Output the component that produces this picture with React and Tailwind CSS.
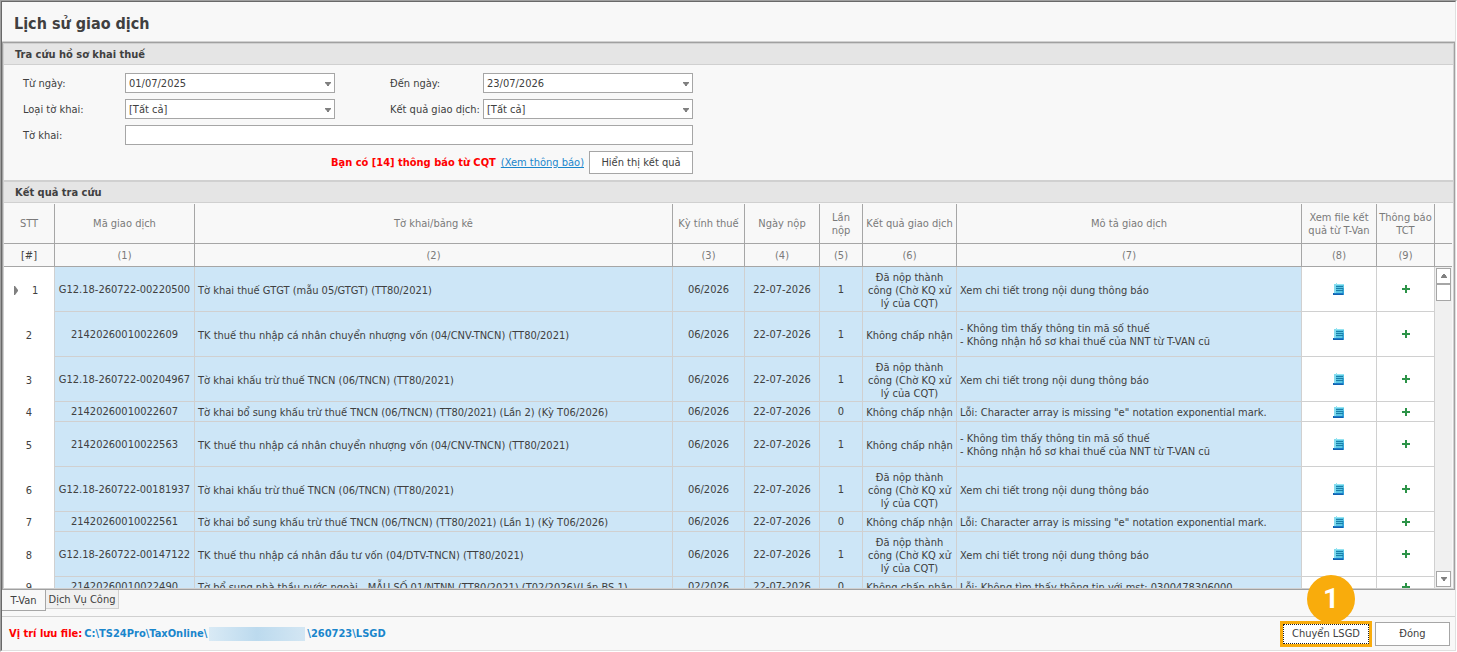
const columns = [
  { title: "Mã giao dịch", width: "w-[140px]" },
  { title: "Tờ khai/bảng kê", width: "w-[478px]" },
  { title: "Kỳ tính thuế", width: "w-[72px]" },
  { title: "Ngày nộp", width: "w-[75px]" },
  { title: "Lần nộp", width: "w-[43px]" },
  { title: "Kết quả giao dịch", width: "w-[94px]" },
  { title: "Mô tả giao dịch", width: "" },
  { title: "Xem file kết quả từ T-Van", width: "w-[75px]" },
  { title: "Thông báo TCT", width: "w-[58px]" },
];

const ACCEPTED = "Đã nộp thành công (Chờ KQ xử lý của CQT)";
const REJECTED = "Không chấp nhận";
const DETAIL = ["Xem chi tiết trong nội dung thông báo"];
const NOT_FOUND = [
  "- Không tìm thấy thông tin mã số thuế",
  "- Không nhận hồ sơ khai thuế của NNT từ T-VAN cũ",
];
const ARRAY_ERROR = ['Lỗi: Character array is missing "e" notation exponential mark.'];

const rows = [
  { code: "G12.18-260722-00220500", name: "Tờ khai thuế GTGT (mẫu 05/GTGT) (TT80/2021)", period: "06/2026", count: 1, result: ACCEPTED, note: DETAIL, tall: true },
  { code: "21420260010022609", name: "TK thuế thu nhập cá nhân chuyển nhượng vốn (04/CNV-TNCN) (TT80/2021)", period: "06/2026", count: 1, result: REJECTED, note: NOT_FOUND, tall: true },
  { code: "G12.18-260722-00204967", name: "Tờ khai khấu trừ thuế TNCN (06/TNCN) (TT80/2021)", period: "06/2026", count: 1, result: ACCEPTED, note: DETAIL, tall: true },
  { code: "21420260010022607", name: "Tờ khai bổ sung khấu trừ thuế TNCN (06/TNCN) (TT80/2021) (Lần 2) (Kỳ T06/2026)", period: "06/2026", count: 0, result: REJECTED, note: ARRAY_ERROR, tall: false },
  { code: "21420260010022563", name: "TK thuế thu nhập cá nhân chuyển nhượng vốn (04/CNV-TNCN) (TT80/2021)", period: "06/2026", count: 1, result: REJECTED, note: NOT_FOUND, tall: true },
  { code: "G12.18-260722-00181937", name: "Tờ khai khấu trừ thuế TNCN (06/TNCN) (TT80/2021)", period: "06/2026", count: 1, result: ACCEPTED, note: DETAIL, tall: true },
  { code: "21420260010022561", name: "Tờ khai bổ sung khấu trừ thuế TNCN (06/TNCN) (TT80/2021) (Lần 1) (Kỳ T06/2026)", period: "06/2026", count: 0, result: REJECTED, note: ARRAY_ERROR, tall: false },
  { code: "G12.18-260722-00147122", name: "TK thuế thu nhập cá nhân đầu tư vốn (04/DTV-TNCN) (TT80/2021)", period: "06/2026", count: 1, result: ACCEPTED, note: DETAIL, tall: true },
  { code: "21420260010022490", name: "Tờ bổ sung nhà thầu nước ngoài - MẪU SỐ 01/NTNN (TT80/2021) (T02/2026)(Lần BS 1)", period: "02/2026", count: 0, result: REJECTED, note: ["Lỗi: Không tìm thấy thông tin với mst: 0300478306000"], tall: false },
];

function Caret({ up = false }) {
  return (
    <svg width="6" height="4" viewBox="0 0 6 4" fill="#808080" aria-hidden="true">
      <path d={up ? "M2 0h2v1h1v1l1 1v1H0V3l1-1V1h1z" : "M0 0h6v1L4 3v1H2V3L0 1z"} />
    </svg>
  );
}

function FileIcon() {
  return (
    <svg width="12" height="12" viewBox="0 0 12 12" aria-hidden="true">
      <path d="M1 1h10v9H1z" fill="#5ac6e4" />
      <path d="M1 1h2v9H1z" fill="#86dcee" />
      <path d="M3 0h1v1h7v1H3z" fill="#93e4f2" />
      <path d="M9 5h2v6H9z" fill="#35a6d6" />
      <path d="M3 3h7v1H3zM3 5h7v1H3zM3 7h7v1H3z" fill="#1a7fa8" />
      <path d="M0 10h10v2H0z" fill="#1161b0" />
      <path d="M1 10h9v1H1z" fill="#1c7cc8" />
      <path d="M10 10h1v2h-1z" fill="#2f9bd6" />
    </svg>
  );
}

function PlusIcon() {
  return (
    <svg width="8" height="8" viewBox="0 0 8 8" fill="#2c9348" aria-hidden="true">
      <path d="M3 0h2v3h3v2H5v3H3V5H0V3h3z" />
    </svg>
  );
}

function Combo({ id, value }) {
  return (
    <div className="relative">
      <select id={id} defaultValue={value} className="block h-5 w-full appearance-none border border-[#a6a6a6] bg-white pl-[3px] pr-4 pt-px outline-none">
        <option>{value}</option>
      </select>
      <span className="pointer-events-none absolute right-1 top-[9px]">
        <Caret />
      </span>
    </div>
  );
}

function Band({ children }) {
  return (
    <h2 className="flex h-[21px] shrink-0 items-center border-b border-[#d0d0d0] bg-[#e5e5e5] pl-[11px] text-[11px] font-bold text-[#404040]">
      {children}
    </h2>
  );
}

const headCell = "border-b border-r border-[#a6a6a6] p-0 font-normal";
const cell = "border-b border-r border-[#d0d0d0] bg-[#cde6f7] p-0";
const textCell = "border-b border-r border-[#d0d0d0] bg-[#cde6f7] p-0 pt-[2px]";
const actionCell = "border-b border-r border-[#d0d0d0] bg-white p-0";

export default function App() {
  return (
    <div className="flex h-screen flex-col border-b border-r border-white border-l-[#a0a0a0] border-t border-l border-t-[#a0a0a0] bg-[#f8f8f8] font-['DejaVu_Sans_Condensed','DejaVu_Sans',sans-serif] text-[11px] leading-[13px] text-[#404040]">
      <div className="flex min-h-0 flex-1 flex-col border border-[#e0e0e0] border-l-[#696969] border-t-[#696969]">
        <header className="flex h-10 shrink-0 items-center border-b border-[#d0d0d0] pl-3 pt-1">
          <h1 className="text-[16px] font-bold leading-5">Lịch sử giao dịch</h1>
        </header>

        <main className="flex min-h-0 flex-1 flex-col border border-[#a0a0a0]">
          <div className="flex min-h-0 flex-1 flex-col border border-[#d0d0d0]">
            <Band>Tra cứu hồ sơ khai thuế</Band>
            <form className="w-[689px] shrink-0 pb-[6px] pl-[19px] pt-2" onSubmit={(e) => e.preventDefault()}>
              <div className="grid grid-cols-[102px_210px_55px_93px_210px] items-center gap-y-[6px]">
                <label htmlFor="from">Từ ngày:</label>
                <Combo id="from" value="01/07/2025" />
                <label htmlFor="to" className="col-start-4">Đến ngày:</label>
                <Combo id="to" value="23/07/2026" />
                <label htmlFor="kind">Loại tờ khai:</label>
                <Combo id="kind" value="[Tất cả]" />
                <label htmlFor="result" className="col-start-4 whitespace-nowrap">Kết quả giao dịch:</label>
                <Combo id="result" value="[Tất cả]" />
                <label htmlFor="declaration">Tờ khai:</label>
                <input id="declaration" type="text" className="col-span-4 h-5 w-full border border-[#a6a6a6] bg-white px-[3px] outline-none" />
              </div>
              <div className="mt-[6px] flex items-center justify-end gap-[5px]">
                <strong className="text-[#ff0000]">Bạn có [14] thông báo từ CQT</strong>
                <a href="#notices" className="text-[#1a86cc] underline">(Xem thông báo)</a>
                <button type="submit" className="h-[23px] w-[104px] border border-[#a6a6a6] bg-white">Hiển thị kết quả</button>
              </div>
            </form>

            <div className="h-[2px] shrink-0 bg-[#d0d0d0]" />
            <Band>Kết quả tra cứu</Band>

            <section className="flex min-h-0 flex-1 pr-px pt-px">
              <div className="min-w-0 flex-1 overflow-hidden">
                <table className="w-full table-fixed border-separate border-spacing-0">
                  <colgroup>
                    <col className="w-[51px]" />
                    {columns.map((c) => (
                      <col key={c.title} className={c.width} />
                    ))}
                  </colgroup>
                  <thead className="text-[#7a7a7a]">
                    <tr className="h-10">
                      <th className={headCell}>STT</th>
                      {columns.map((c) => (
                        <th key={c.title} className={`${headCell} px-[2px]`}>{c.title}</th>
                      ))}
                    </tr>
                    <tr className="h-[23px]">
                      <th className={`${headCell} text-[#404040]`}>[#]</th>
                      {columns.map((c, i) => (
                        <th key={c.title} className={headCell}>({i + 1})</th>
                      ))}
                    </tr>
                  </thead>
                  <tbody className="text-center">
                    {rows.map((r, i) => (
                      <tr key={r.code} className={r.tall ? "h-[45px]" : "h-5"}>
                        <td className="border-r border-[#d0d0d0] bg-white p-0 pt-px">
                          {i === 0 ? (
                            <div className="flex items-center gap-[13px] pl-[10px]">
                              <svg width="5" height="9" viewBox="0 0 5 9" fill="#808080" aria-hidden="true">
                                <path d="M0 0h1l3 4v1L1 9H0z" />
                              </svg>
                              1
                            </div>
                          ) : (
                            i + 1
                          )}
                        </td>
                        <td className={`${cell} whitespace-nowrap`}>{r.code}</td>
                        <td className={`${textCell} whitespace-nowrap pl-[3px] text-left`}>{r.name}</td>
                        <td className={cell}>{r.period}</td>
                        <td className={cell}>22-07-2026</td>
                        <td className={cell}>{r.count}</td>
                        <td className={textCell}>{r.result}</td>
                        <td className={`${textCell} whitespace-nowrap pl-[3px] text-left`}>
                          {r.note.map((line) => (
                            <div key={line}>{line}</div>
                          ))}
                        </td>
                        <td className={actionCell}>
                          <button type="button" aria-label="Xem file kết quả" className="mx-auto block">
                            <FileIcon />
                          </button>
                        </td>
                        <td className={actionCell}>
                          <button type="button" aria-label="Xem thông báo TCT" className="mx-auto block">
                            <PlusIcon />
                          </button>
                        </td>
                      </tr>
                    ))}
                  </tbody>
                </table>
              </div>
              <div className="flex w-[17px] shrink-0 flex-col">
                <div className="h-10 shrink-0 border-b border-[#a6a6a6]" />
                <div className="h-[23px] shrink-0 border-b border-[#a6a6a6]" />
                <div className="flex flex-1 flex-col bg-[#f0f0f0] p-px">
                  <button type="button" aria-label="Cuộn lên" className="flex h-4 items-center justify-center border border-[#a6a6a6] bg-white">
                    <Caret up />
                  </button>
                  <div className="h-[17px] border border-[#a6a6a6] bg-white" />
                  <button type="button" aria-label="Cuộn xuống" className="mt-auto flex h-4 items-center justify-center border border-[#a6a6a6] bg-white">
                    <Caret />
                  </button>
                </div>
              </div>
            </section>
          </div>
        </main>

        <nav className="flex h-[26px] shrink-0 items-start">
          <button type="button" className="h-[21px] w-11 border-b border-r border-[#a6a6a6]">T-Van</button>
          <button type="button" className="h-[19px] w-[73px] border-b border-r border-[#d0d0d0] bg-[#f0f0f0]">Dịch Vụ Công</button>
        </nav>

        <footer className="flex h-[34px] shrink-0 items-center border-t border-[#d0d0d0] pl-[7px] pr-[5px] font-bold">
          <span className="mr-[2px] text-[#ff0000]">Vị trí lưu file:</span>
          <span className="text-[#1a86cc]">C:\TS24Pro\TaxOnline\</span>
          <span className="mx-[2px] h-[14px] w-24 bg-linear-to-r from-[#d9eaf5] via-[#bcdaee] to-[#d3e6f3]" />
          <span className="text-[#1a86cc]">\260723\LSGD</span>
          <div className="relative ml-auto font-normal">
            <span className="absolute bottom-6 left-[27px] flex h-12 w-12 items-center justify-center rounded-full bg-[#f9ac0c] font-[Roboto] text-[28px] font-bold leading-none text-white">
              1
            </span>
            <button type="button" className="relative block h-[26px] w-[92px] border-[3px] border-[#f9ac0c] bg-white">
              <span className="flex h-full items-center justify-center border border-dotted border-[#202020]">Chuyển LSGD</span>
            </button>
          </div>
          <button type="button" className="ml-[3px] h-6 w-[75px] border border-[#a6a6a6] bg-white font-normal">Đóng</button>
        </footer>
      </div>
    </div>
  );
}
